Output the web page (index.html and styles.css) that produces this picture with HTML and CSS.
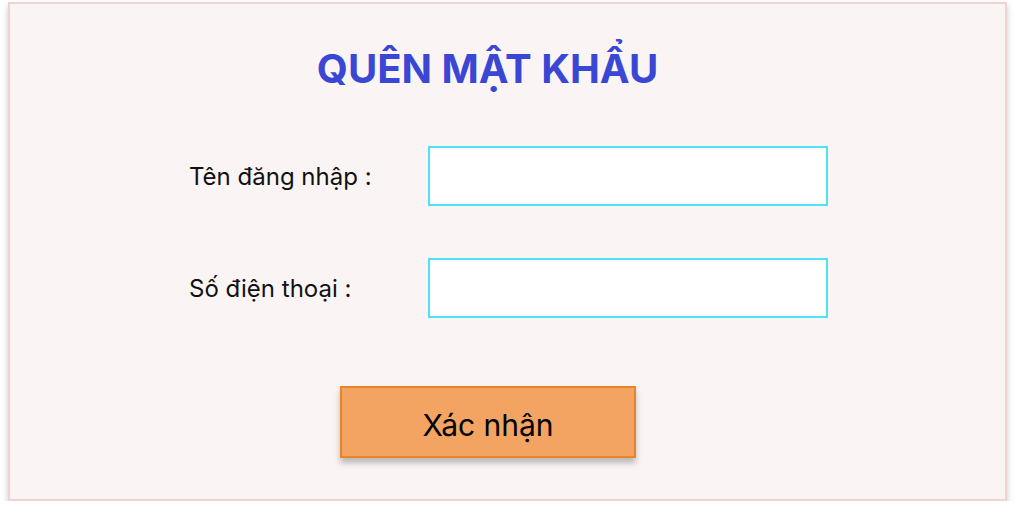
FILE: index.html
```html
<!DOCTYPE html>
<html lang="vi">
<head>
<meta charset="utf-8">
<title>Quên mật khẩu</title>
<link rel="stylesheet" href="styles.css">
</head>
<body>
<div class="panel">
  <h1 class="title">QUÊN MẬT KHẨU</h1>
  <form class="form">
    <label class="label" for="user">Tên đăng nhập :</label>
    <input class="field" id="user" type="text">
    <label class="label" for="phone">Số điện thoại :</label>
    <input class="field" id="phone" type="text">
  </form>
  <button class="submit" type="button">Xác nhận</button>
</div>
</body>
</html>
```
FILE: styles.css
```css
html, body {
  margin: 0;
  padding: 0;
  background: #ffffff;
  font-family: Inter, "Noto Sans", sans-serif;
}
.panel {
  box-sizing: border-box;
  width: 999px;
  height: 499px;
  margin: 2px 0 0 8px;
  background: #faf5f4;
  border: 2px solid #efd3d3;
  box-shadow: 0 4px 6px rgba(0, 0, 0, 0.22);
  display: flex;
  flex-direction: column;
  align-items: flex-start;
}
.title {
  align-self: stretch;
  margin: 41px 40px 0 0;
  font-size: 40px;
  line-height: 48px;
  font-weight: 700;
  color: #3a47d5;
  text-align: center;
}
.form {
  margin: 53px 0 0 179px;
  display: grid;
  grid-template-columns: 239px 400px;
  row-gap: 52px;
  align-items: center;
}
.label {
  font-size: 24px;
  color: #111111;
}
.field {
  box-sizing: border-box;
  width: 400px;
  height: 60px;
  margin: 0;
  border: 2px solid #4de3f7;
  background: #ffffff;
  outline: none;
}
.submit {
  box-sizing: border-box;
  margin: 68px 0 0 330px;
  width: 296px;
  height: 72px;
  background: #f4a462;
  border: 2px solid #e8852a;
  box-shadow: 0 5px 6px rgba(0, 0, 0, 0.25);
  font-family: Inter, "Noto Sans", sans-serif;
  font-size: 30px;
  color: #000000;
  padding: 6px 0 0 0;
}
```
